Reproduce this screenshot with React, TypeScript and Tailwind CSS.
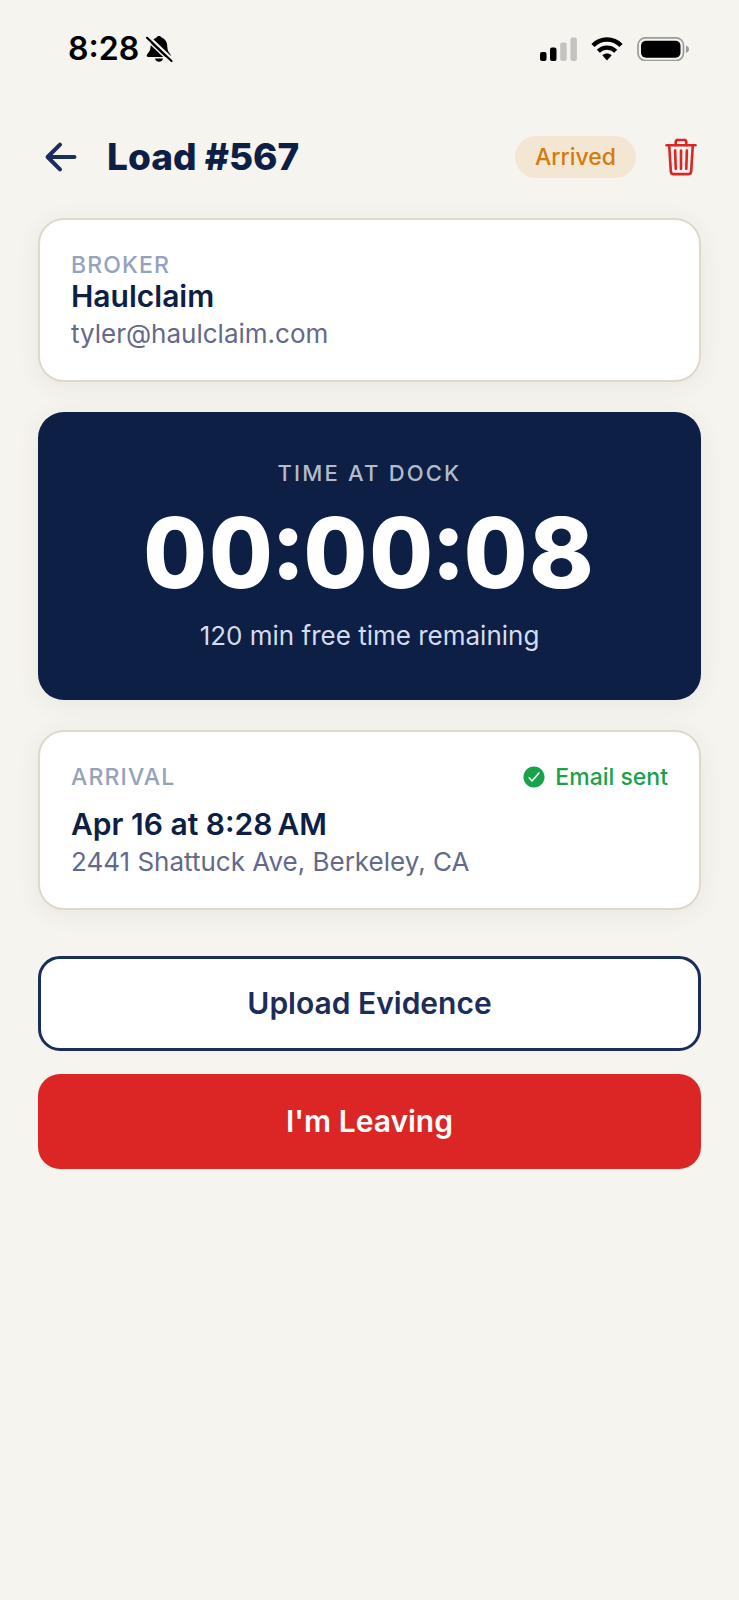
import type { ReactNode } from "react";
import { IoArrowBack, IoCheckmarkCircle, IoTrashOutline } from "react-icons/io5";

const StatusBar = () => {
    return (
        <div className="h-[98px] flex justify-between items-center pl-[68px] pr-[49px] text-black">
            <div className="flex items-center gap-1.5">
                <p className="text-[32px] leading-10 font-semibold">8:28</p>
                <svg className="w-7 h-7" viewBox="0 0 28 28" fill="currentColor" aria-hidden="true">
                    <path d="M10 23.5H18C17.5 25.800 16 26.700 14 26.700S10.500 25.800 10 23.500Z" />
                    <path d="M11.500 2.500C12.200.4 15.800.4 16.500 2.500C20.300 3.900 22.300 7.200 22.300 11.500C22.400 16 24 17.400 25.300 19.200C26.300 20.600 25.700 22 24 22H3.500C1.800 22 1.200 20.600 2.200 19.200C3.800 17.200 5.400 15.800 5.600 11.500C5.700 7.200 7.700 3.900 11.500 2.500Z" />
                    <path d="M2.500 .8L28 25.200" stroke="#f5f4ef" strokeWidth="3" />
                    <path d="M2 2.800L26.500 26" stroke="currentColor" strokeWidth="2.200" strokeLinecap="round" />
                    <path d="M0 3.700L25 27.500" stroke="#f5f4ef" strokeWidth="1.400" />
                </svg>
            </div>
            <div className="flex items-center gap-[14px]">
                <svg className="w-[38px] h-6" viewBox="0 0 38 24" aria-hidden="true">
                    <rect x="1" y="15" width="6.500" height="9" rx="2" />
                    <rect x="11" y="10.500" width="6.500" height="13.500" rx="2" />
                    <rect x="21.200" y="5.500" width="6.500" height="18.500" rx="2" fill="#c4c3bf" />
                    <rect x="31.400" y="0.500" width="6.500" height="23.500" rx="2" fill="#c4c3bf" />
                </svg>
                <svg className="w-8 h-6" viewBox="0 0 32 24" fill="none" stroke="currentColor" aria-hidden="true">
                    <path d="M2 8.500C9.800.5 22.200.5 30 8.500" strokeWidth="4.600" />
                    <path d="M7.300 14.200C12.200 9.300 19.800 9.300 24.700 14.200" strokeWidth="4.300" />
                    <path d="M11.300 18.300C14 15.900 18 15.900 20.700 18.300L16 23.500Z" fill="currentColor" stroke="none" />
                </svg>
                <svg className="w-[53px] h-6" viewBox="0 0 53 24" aria-hidden="true">
                    <rect x="1" y="0.800" width="45.500" height="22.800" rx="7.500" fill="none" stroke="#9c9b98" strokeWidth="1.700" />
                    <rect x="4" y="3.700" width="39.500" height="17" rx="5" />
                    <path d="M49 8.500C53 9.800 53 14.600 49 15.900Z" fill="#9c9b98" />
                </svg>
            </div>
        </div>
    );
};

const Card = ({ children }: { children: ReactNode }) => {
    return (
        <section className="bg-white border-2 border-[#dedacb] rounded-[26px] px-[31px] pt-[30px] pb-7 shadow-[0_4px_24px_rgba(60,50,10,0.07)]">
            {children}
        </section>
    );
};

const App = () => {
    return (
        <div className="min-h-screen bg-[#f5f4ef] font-['Inter','Liberation_Sans',sans-serif] text-[#0d1f45]">
            <StatusBar />
            <header className="h-[118px] pl-[39px] pr-[37px] flex items-center justify-between">
                <div className="flex items-center gap-6">
                    <button aria-label="Back" className="text-[#1b2d5b]">
                        <IoArrowBack className="w-11 h-11" />
                    </button>
                    <h1 className="text-[37px] leading-[44px] font-extrabold">Load #567</h1>
                </div>
                <div className="flex items-center gap-6">
                    <span className="rounded-full bg-[#f3e6d3] px-5 py-1.5 text-[23px] leading-[30px] font-medium text-[#d27c0e]">Arrived</span>
                    <button aria-label="Delete load" className="text-[#dc2626]">
                        <IoTrashOutline className="w-[42px] h-[42px]" />
                    </button>
                </div>
            </header>
            <main className="px-[38px] pt-0.5 pb-10 flex flex-col gap-[30px]">
                <Card>
                    <p className="text-[23px] leading-[30px] font-medium tracking-wider text-[#94a2bd]">BROKER</p>
                    <p className="text-[30px] leading-8 font-semibold">Haulclaim</p>
                    <p className="mt-1 text-[26px] leading-9 text-[#64698a]">tyler@haulclaim.com</p>
                </Card>
                <section className="bg-[#0d1f45] rounded-[26px] py-[46px] text-center shadow-[0_4px_24px_rgba(60,50,10,0.07)]">
                    <p className="text-[22px] leading-[30px] font-medium tracking-widest text-[#b4bac9]">TIME AT DOCK</p>
                    <p className="my-2 text-[98px] leading-[114px] font-extrabold tracking-wide tabular-nums [font-feature-settings:'case'] text-white">00:00:08</p>
                    <p className="text-[26px] leading-9 text-[#d3dcee]">120 min free time remaining</p>
                </section>
                <Card>
                    <div className="flex justify-between items-center text-[23px] leading-[30px] font-medium">
                        <p className="tracking-wider text-[#94a2bd]">ARRIVAL</p>
                        <p className="flex items-center gap-2 text-[#16a34a]">
                            <IoCheckmarkCircle className="w-[26px] h-[26px]" />
                            Email sent
                        </p>
                    </div>
                    <p className="mt-4 text-[30px] leading-8 font-semibold">Apr 16 at 8:28{"\u202f"}AM</p>
                    <p className="mt-1 text-[26px] leading-9 text-[#64698a]">2441 Shattuck Ave, Berkeley, CA</p>
                </Card>
                <div className="mt-4 flex flex-col gap-[23px] text-[30px] font-semibold">
                    <button className="h-[95px] w-full rounded-[22px] border-3 border-[#1b2d5b] bg-white text-[#1b2d5b]">Upload Evidence</button>
                    <button className="h-[95px] w-full rounded-[22px] bg-[#dc2626] text-white">I'm Leaving</button>
                </div>
            </main>
        </div>
    );
};

export default App;
